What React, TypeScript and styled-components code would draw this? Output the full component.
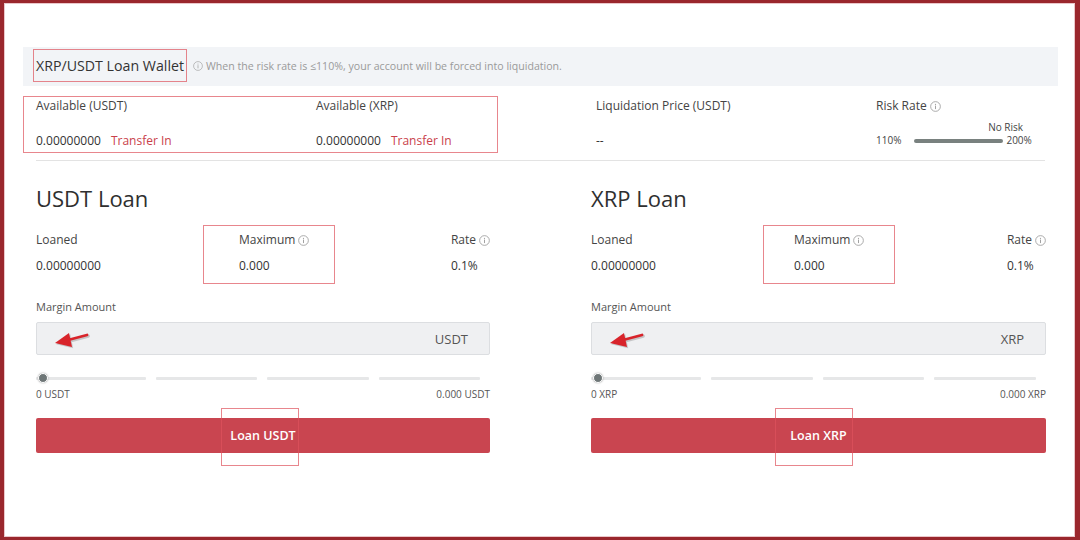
import React from 'react';
import styled, { createGlobalStyle } from 'styled-components';

const GlobalStyle = createGlobalStyle`
  html, body {
    margin: 0;
    padding: 0;
    background: #fff;
  }
  * {
    box-sizing: border-box;
  }
`;

const Frame = styled.div`
  width: 1080px;
  height: 540px;
  overflow: hidden;
  background: #fff;
  border-style: solid;
  border-color: #9a272d;
  border-width: 3px 5px 3px 4px;
  box-shadow: inset 1px 1px 0 #ebc7ca, inset -1px -1px 0 #ebc7ca;
  padding: 44px 17px 0 19px;
  font-family: 'Open Sans', 'Liberation Sans', sans-serif;
  color: #333;
`;

const HeaderBar = styled.div`
  height: 39px;
  background: #f2f4f7;
  display: flex;
  align-items: center;
  padding: 0 0 2px 10px;
`;

const Annotated = styled.div`
  border: 1px solid rgba(222, 82, 92, 0.7);
`;

const WalletTitle = styled(Annotated)`
  height: 33px;
  padding: 0 2px;
  display: flex;
  align-items: center;
  font-size: 14.2px;
  color: #333;
`;

const Notice = styled.div`
  margin-left: 6px;
  display: flex;
  align-items: center;
  gap: 3px;
  font-size: 10.6px;
  color: #9a9a9a;
`;

const Body = styled.div`
  padding: 0 12px 0 13px;
`;

const StatsRow = styled.div`
  position: relative;
  margin-top: 10px;
  height: 57px;
  display: grid;
  grid-template-columns: 280px 280px 280px 1fr;
`;

const WalletMark = styled(Annotated)`
  position: absolute;
  left: -13px;
  top: 0;
  width: 475px;
  height: 57px;
  pointer-events: none;
`;

const StatCell = styled.div`
  display: flex;
  flex-direction: column;
  justify-content: space-between;
  padding: 2px 0 4px;
`;

const Label = styled.div`
  display: flex;
  align-items: center;
  gap: 3px;
  font-size: 12px;
  line-height: 16px;
  color: #444;
`;

const Value = styled.div`
  display: flex;
  gap: 10px;
  font-size: 12px;
  line-height: 16px;
  color: #333;
`;

const TransferLink = styled.span`
  color: #c9414b;
`;

const RiskCell = styled.div`
  padding-top: 2px;
  width: 160px;
`;

const NoRisk = styled.div`
  margin-top: 7px;
  text-align: right;
  padding-right: 13px;
  font-size: 10px;
  line-height: 13px;
  color: #444;
`;

const RiskLine = styled.div`
  display: flex;
  align-items: center;
  font-size: 10px;
  line-height: 13px;
  color: #444;
`;

const RiskBar = styled.div`
  width: 89px;
  height: 4px;
  border-radius: 2px;
  background: #79817f;
  margin: 0 3px 0 13px;
`;

const Divider = styled.div`
  margin-top: 7px;
  height: 1px;
  background: #e3e3e3;
  margin-right: 1px;
`;

const Panels = styled.div`
  display: flex;
  justify-content: space-between;
`;

const Panel = styled.div<{ $width: number }>`
  width: ${p => p.$width}px;
`;

const PanelTitle = styled.h2`
  margin: 22px 0 0;
  font-size: 22px;
  line-height: 30px;
  font-weight: 400;
  color: #2f2f2f;
`;

const LoanStats = styled.div`
  margin-top: 19px;
  display: grid;
  grid-template-columns: 203px 1fr auto;
`;

const LoanStat = styled.div<{ $right?: boolean }>`
  position: relative;
  display: flex;
  flex-direction: column;
  align-items: ${p => (p.$right ? 'flex-end' : 'flex-start')};
  gap: 10px;
`;

const MaxMark = styled(Annotated)<{ $left: number }>`
  position: absolute;
  left: ${p => p.$left}px;
  top: -7px;
  width: 132px;
  height: 59px;
  pointer-events: none;
`;

const FieldLabel = styled.div`
  margin-top: 25px;
  font-size: 11px;
  line-height: 15px;
  color: #555;
`;

const AmountInput = styled.div`
  position: relative;
  margin-top: 8px;
  height: 33px;
  background: #eff0f2;
  border: 1px solid #dcdee1;
  border-radius: 2px;
  display: flex;
  align-items: center;
  justify-content: flex-end;
  padding-right: 21px;
  font-size: 13px;
  color: #555;
`;

const ArrowMark = styled.svg`
  position: absolute;
  left: 17px;
  top: 9px;
`;

const Slider = styled.div`
  position: relative;
  margin-top: 18px;
  height: 10px;
  display: grid;
  grid-template-columns: 110px repeat(3, 1fr);
  gap: 10px;
  align-items: center;
  padding-right: 10px;
`;

const Track = styled.div`
  height: 3px;
  background: #e6e7e8;
  border-radius: 1px;
`;

const Thumb = styled.div`
  position: absolute;
  left: 2px;
  top: 0;
  width: 10px;
  height: 10px;
  border-radius: 50%;
  background: #6e7677;
  border: 1.5px solid #fff;
  box-shadow: 0 0 2px rgba(0, 0, 0, 0.35);
`;

const RangeLabels = styled.div`
  margin-top: 5px;
  display: flex;
  justify-content: space-between;
  font-size: 10px;
  line-height: 13px;
  color: #555;
`;

const LoanButton = styled.button`
  position: relative;
  margin-top: 17px;
  width: 100%;
  height: 35px;
  border: none;
  border-radius: 2px;
  background: #c94550;
  color: #fff;
  font-family: 'Open Sans', 'Liberation Sans', sans-serif;
  font-size: 12.5px;
  font-weight: 600;
  padding: 0;
`;

const ButtonMark = styled(Annotated)<{ $left: number }>`
  position: absolute;
  left: ${p => p.$left}px;
  top: -10px;
  width: 78px;
  height: 58px;
  pointer-events: none;
`;

const InfoIcon: React.FC<{ size?: number; color?: string }> = ({ size = 11, color = '#9a9a9a' }) => (
  <svg width={size} height={size} viewBox="0 0 12 12" fill="none">
    <circle cx="6" cy="6" r="5.3" stroke={color} strokeWidth="0.9" />
    <circle cx="6" cy="3.6" r="0.65" fill={color} />
    <rect x="5.5" y="5" width="1" height="3.8" fill={color} />
  </svg>
);

const RedArrow: React.FC = () => (
  <ArrowMark width="38" height="20" viewBox="0 0 38 20">
    <g transform="translate(1.2 1.2)" opacity="0.3">
      <path d="M33 3 L14 8" stroke="#666" strokeWidth="3.4" strokeLinecap="round" />
      <path d="M1 11 L15 1 L18 15 Z" fill="#666" />
    </g>
    <path d="M33 3 L14 8" stroke="#d8242b" strokeWidth="2.8" strokeLinecap="round" />
    <path d="M1 11 L15 1 L18 15 Z" fill="#d8242b" />
  </ArrowMark>
);

interface LoanPanelProps {
  coin: string;
  width: number;
  maxMark: number;
  buttonMark: number;
}

const LoanPanel: React.FC<LoanPanelProps> = ({ coin, width, maxMark, buttonMark }) => (
  <Panel $width={width}>
    <PanelTitle>{coin} Loan</PanelTitle>
    <LoanStats>
      <LoanStat>
        <Label>Loaned</Label>
        <Value>0.00000000</Value>
      </LoanStat>
      <LoanStat>
        <MaxMark $left={maxMark} />
        <Label>
          Maximum <InfoIcon />
        </Label>
        <Value>0.000</Value>
      </LoanStat>
      <LoanStat $right>
        <Label>
          Rate <InfoIcon />
        </Label>
        <Value style={{ alignSelf: 'flex-start' }}>0.1%</Value>
      </LoanStat>
    </LoanStats>
    <FieldLabel>Margin Amount</FieldLabel>
    <AmountInput>
      <RedArrow />
      {coin}
    </AmountInput>
    <Slider>
      <Track />
      <Track />
      <Track />
      <Track />
      <Thumb />
    </Slider>
    <RangeLabels>
      <span>0 {coin}</span>
      <span>0.000 {coin}</span>
    </RangeLabels>
    <LoanButton>
      Loan {coin}
      <ButtonMark $left={buttonMark} />
    </LoanButton>
  </Panel>
);

const App: React.FC = () => (
  <>
    <GlobalStyle />
    <Frame>
      <HeaderBar>
        <WalletTitle>XRP/USDT Loan Wallet</WalletTitle>
        <Notice>
          <InfoIcon size={10} color="#aaa" />
          When the risk rate is ≤110%, your account will be forced into liquidation.
        </Notice>
      </HeaderBar>
      <Body>
        <StatsRow>
          <WalletMark />
          <StatCell>
            <Label>Available (USDT)</Label>
            <Value>
              0.00000000 <TransferLink>Transfer In</TransferLink>
            </Value>
          </StatCell>
          <StatCell>
            <Label>Available (XRP)</Label>
            <Value>
              0.00000000 <TransferLink>Transfer In</TransferLink>
            </Value>
          </StatCell>
          <StatCell>
            <Label>Liquidation Price (USDT)</Label>
            <Value>--</Value>
          </StatCell>
          <RiskCell>
            <Label>
              Risk Rate <InfoIcon />
            </Label>
            <NoRisk>No Risk</NoRisk>
            <RiskLine>
              110%
              <RiskBar />
              200%
            </RiskLine>
          </RiskCell>
        </StatsRow>
        <Divider />
        <Panels>
          <LoanPanel coin="USDT" width={454} maxMark={-36} buttonMark={185} />
          <LoanPanel coin="XRP" width={455} maxMark={-31} buttonMark={184} />
        </Panels>
      </Body>
    </Frame>
  </>
);

export default App;
